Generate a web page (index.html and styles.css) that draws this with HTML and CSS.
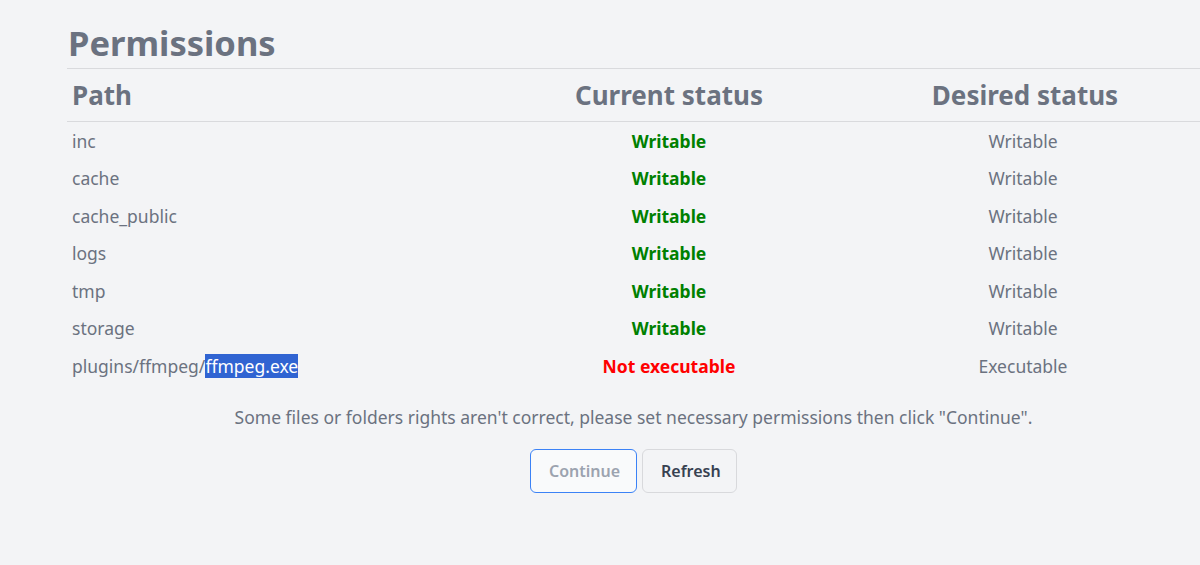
FILE: index.html
```html
<!DOCTYPE html>
<html>
<head>
<meta charset="utf-8">
<link rel="stylesheet" href="styles.css">
</head>
<body>
<main class="page">
  <h1 class="title">Permissions</h1>
  <table class="perm-table">
    <colgroup>
      <col class="col-path">
      <col class="col-current">
      <col class="col-desired">
    </colgroup>
    <thead>
      <tr>
        <th class="th-path">Path</th>
        <th>Current status</th>
        <th>Desired status</th>
      </tr>
    </thead>
    <tbody>
      <tr><td class="path">inc</td><td class="ok">Writable</td><td class="desired">Writable</td></tr>
      <tr><td class="path">cache</td><td class="ok">Writable</td><td class="desired">Writable</td></tr>
      <tr><td class="path">cache_public</td><td class="ok">Writable</td><td class="desired">Writable</td></tr>
      <tr><td class="path">logs</td><td class="ok">Writable</td><td class="desired">Writable</td></tr>
      <tr><td class="path">tmp</td><td class="ok">Writable</td><td class="desired">Writable</td></tr>
      <tr><td class="path">storage</td><td class="ok">Writable</td><td class="desired">Writable</td></tr>
      <tr><td class="path">plugins/ffmpeg/<span class="sel">ffmpeg.exe</span></td><td class="bad">Not executable</td><td class="desired">Executable</td></tr>
    </tbody>
  </table>
  <p class="message">Some files or folders rights aren't correct, please set necessary permissions then click "Continue".</p>
  <div class="actions">
    <button class="btn btn-continue" disabled>Continue</button>
    <button class="btn btn-refresh">Refresh</button>
  </div>
</main>
</body>
</html>
```

FILE: styles.css
```css
html, body {
  margin: 0;
  padding: 0;
  background: #f3f4f6;
}
body {
  font-family: "Noto Sans", "Open Sans", sans-serif;
  color: #6b7280;
}
.page {
  padding: 18px 0 0 67px;
}
.title {
  margin: 0;
  font-size: 34.5px;
  font-weight: 700;
  line-height: 50px;
  color: #6b7280;
  padding-left: 1px;
  border-bottom: 1px solid #d9dadd;
}
.perm-table {
  width: 1133px;
  border-collapse: collapse;
  table-layout: fixed;
}
.col-path { width: 421px; }
.col-current { width: 362px; }
.col-desired { width: 350px; }
.perm-table th {
  font-size: 26px;
  font-weight: 700;
  color: #6b7280;
  height: 52px;
  padding: 0;
  text-align: center;
  border-bottom: 1px solid #d9dadd;
}
.perm-table th.th-path {
  text-align: left;
  padding-left: 5px;
}
.perm-table td {
  font-size: 17.5px;
  height: 37.5px;
  padding: 0;
  text-align: center;
}
.perm-table td.path {
  text-align: left;
  padding-left: 5px;
}
.perm-table td.desired {
  padding-right: 4px;
}
.ok {
  color: #008000;
  font-weight: 700;
}
.bad {
  color: #ff0000;
  font-weight: 700;
}
.sel {
  background: #3064d2;
  color: #ffffff;
}
.message {
  margin: 20px 0 0;
  text-align: center;
  font-size: 17.5px;
  color: #6b7280;
}
.actions {
  display: flex;
  justify-content: center;
  gap: 5px;
  margin-top: 20px;
}
.btn {
  font-family: inherit;
  font-size: 16px;
  font-weight: 600;
  height: 44px;
  border-radius: 6px;
  padding: 0 18px;
}
.btn-continue {
  width: 107px;
  background: #f9fafb;
  border: 1px solid #3b82f6;
  color: #9ca3af;
}
.btn-refresh {
  width: 95px;
  background: #f3f4f6;
  border: 1px solid #d8d9dc;
  color: #374151;
}
```
